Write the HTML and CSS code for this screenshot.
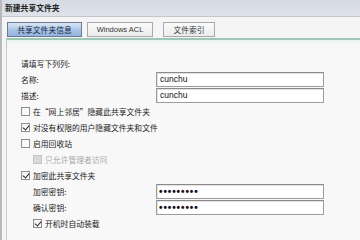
FILE: index.html
```html
<!DOCTYPE html>
<html>
<head>
<meta charset="utf-8">
<link rel="stylesheet" href="styles.css">
</head>
<body>
<div class="win">
  <div class="title">新建共享文件夹</div>
  <div class="tabs">
    <div class="tab active">共享文件夹信息</div>
    <div class="tab t2">Windows ACL</div>
    <div class="tab t3">文件索引</div>
  </div>
  <div class="panel">
    <div class="lead">请填写下列列:</div>
    <div class="field"><span class="lbl">名称:</span><span class="input">cunchu</span></div>
    <div class="field"><span class="lbl">描述:</span><span class="input">cunchu</span></div>
    <div class="chk"><span class="box"></span><span>在“网上邻居”隐藏此共享文件夹</span></div>
    <div class="chk"><span class="box on"></span><span>对没有权限的用户隐藏文件夹和文件</span></div>
    <div class="chk"><span class="box"></span><span>启用回收站</span></div>
    <div class="chk sub dis"><span class="box"></span><span>只允许管理者访问</span></div>
    <div class="chk"><span class="box on"></span><span>加密此共享文件夹</span></div>
    <div class="field sub"><span class="lbl">加密密钥:</span><span class="input pw">•••••••••</span></div>
    <div class="field sub"><span class="lbl">确认密钥:</span><span class="input pw">•••••••••</span></div>
    <div class="chk sub"><span class="box on"></span><span>开机时自动装载</span></div>
  </div>
</div>
</body>
</html>
```
FILE: styles.css
```css
* { box-sizing: border-box; }
html, body { margin: 0; padding: 0; }
body {
  width: 360px; height: 240px; overflow: hidden;
  background: #f6f5f6;
  font-family: "Noto Sans CJK SC", "Noto Sans", sans-serif;
  font-size: 7.8px;
  color: #1a1a1a;
}
.win { width: 360px; height: 240px; border-left: 2px solid #b9b9bd; }
.title {
  height: 17px;
  padding-left: 3px;
  line-height: 16px;
  font-weight: bold;
  background: linear-gradient(#d6dae3, #dfe2e9);
  border-bottom: 1px solid #c3c6cc;
  color: #222;
}
.tabs {
  display: flex;
  height: 21px;
  padding: 5px 0 0 5px;
  background: #f6f5f6;
}
.tab {
  height: 15px;
  line-height: 13px;
  text-align: center;
  border: 1px solid #a9a9ab;
  background: linear-gradient(#fbfbfb, #ececec);
  color: #333;
}
.tab.active {
  width: 75px;
  border-color: #6b7a90;
  background: linear-gradient(#dbe8f7, #a8c3e6 55%, #93b3df);
  color: #12233d;
}
.tab.t2 { width: 66px; margin-left: 5px; font-family: "Liberation Sans", sans-serif; font-size: 7.5px; }
.tab.t3 { width: 52px; margin-left: 10px; }
.panel {
  margin-left: 4px;
  height: 202px;
  border-top: 2px solid #9ec6b4;
  border-left: 1px solid #c9c9cb;
  background: linear-gradient(#e6f4ef, #f8f8f8 4px);
  padding: 18px 0 0 14px;
  display: flex;
  flex-direction: column;
}
.lead { height: 13px; line-height: 12px; }
.field { display: flex; align-items: center; height: 16px; }
.field.sub { padding-left: 12px; }
.lbl { width: 135px; flex: none; }
.field.sub .lbl { width: 123px; }
.input {
  width: 168px; height: 15px;
  border: 1px solid #9c9c9c;
  border-top-color: #8a8a8a;
  background: #fff;
  padding-left: 3px;
  line-height: 13px;
  font-family: "Liberation Sans", sans-serif;
  font-size: 8.5px;
  color: #111;
  box-shadow: inset 1px 1px 0 #e2e2e2;
}
.input.pw { font-size: 10px; letter-spacing: 0.9px; font-weight: bold; padding-left: 2px; }
.chk { display: flex; align-items: center; height: 16px; gap: 3px; }
.chk.sub { padding-left: 12px; }
.box {
  width: 9px; height: 9px; flex: none;
  border: 1px solid #8e8e8e;
  background: linear-gradient(135deg, #f1f1f1, #ffffff);
  position: relative;
}
.box.on::after {
  content: "";
  position: absolute;
  left: 2px; top: 0px;
  width: 3px; height: 5px;
  border-right: 1.4px solid #2b2b2b;
  border-bottom: 1.4px solid #2b2b2b;
  transform: rotate(40deg);
}
.dis { color: #a9a9a9; }
.dis .box { background: #d9d9d9; border-color: #c4c4c4; }
```
